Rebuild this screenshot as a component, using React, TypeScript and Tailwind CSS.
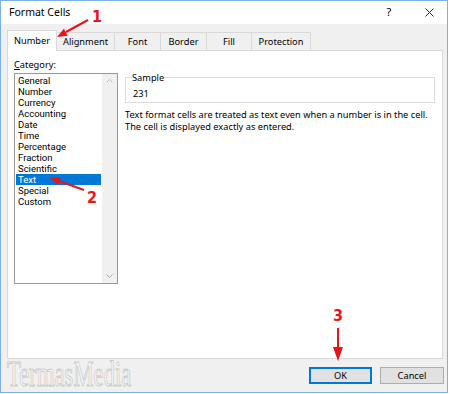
const categories = [
	"General",
	"Number",
	"Currency",
	"Accounting",
	"Date",
	"Time",
	"Percentage",
	"Fraction",
	"Scientific",
	"Text",
	"Special",
	"Custom",
];

const tabs = [
	{ label: "Alignment", w: "w-[58px]" },
	{ label: "Font", w: "w-[46px]" },
	{ label: "Border", w: "w-[46px]" },
	{ label: "Fill", w: "w-[45px]" },
	{ label: "Protection", w: "w-[59px]" },
];

const Annotations = () => (
	<>
		<svg
			className="pointer-events-none absolute left-0 top-0"
			width={450}
			height={394}
			viewBox="0 0 450 394"
		>
			<g stroke="#e8141b" strokeWidth={2} fill="#e8141b">
				<line x1={88} y1={20} x2={66} y2={32} />
				<polygon points="57,37 67.7,35.7 63.9,28.7" stroke="none" />
				<line x1={84} y1={190} x2={59} y2={181} />
				<polygon points="50,178 60.7,177.5 58.1,185.1" stroke="none" />
				<line x1={338} y1={328} x2={338} y2={348} />
				<polygon points="333,347 343,347 338,361" stroke="none" />
			</g>
		</svg>
		<span className="absolute left-[92px] top-[9px] font-['Liberation_Sans_Narrow','DejaVu_Sans_Condensed',sans-serif] text-[16px] font-bold leading-[16px] text-[#e8141b]">
			1
		</span>
		<span className="absolute left-[87px] top-[190px] font-['Liberation_Sans_Narrow','DejaVu_Sans_Condensed',sans-serif] text-[16px] font-bold leading-[16px] text-[#e8141b]">
			2
		</span>
		<span className="absolute left-[333px] top-[308px] font-['Liberation_Sans_Narrow','DejaVu_Sans_Condensed',sans-serif] text-[16px] font-bold leading-[16px] text-[#e8141b]">
			3
		</span>
	</>
);

export default function App() {
	return (
		<div className="relative h-[394px] w-[450px] overflow-hidden bg-white font-['Noto_Sans',sans-serif] text-[9.25px] text-black">
			<div className="flex h-[393px] w-[448px] flex-col border border-[#7db0e3] bg-[#f0f0f0]">
				{/* title bar */}
				<div className="flex h-[25px] items-center bg-white pl-[8px]">
					<span className="text-[10.5px]">Format Cells</span>
					<div className="ml-auto flex items-center pr-[8px]">
						<span className="w-[20px] text-center text-[11px]">?</span>
						<span className="ml-[20px] flex w-[20px] justify-center">
							<svg width={9} height={9} viewBox="0 0 9 9">
								<path d="M0.5 0.5 L8.5 8.5 M8.5 0.5 L0.5 8.5" stroke="#333" strokeWidth={1} />
							</svg>
						</span>
					</div>
				</div>

				<div className="flex flex-1 flex-col pl-[6px]">
					{/* tabs */}
					<div className="mt-[6px] flex h-[20px] items-end">
						<div className="relative z-10 -mb-px flex h-[21px] w-[50px] items-center justify-center border-x border-t border-[#d9d9d9] bg-white">
							Number
						</div>
						{tabs.map((t) => (
							<div
								key={t.label}
								className={`flex h-[18px] ${t.w} items-center justify-center border-r border-t border-[#d9d9d9] bg-[#f0f0f0]`}
							>
								{t.label}
							</div>
						))}
					</div>

					{/* panel */}
					<div className="flex h-[309px] w-[436px] border border-[#d9d9d9] bg-white pl-[6px] pt-[7px]">
						<div className="flex flex-col">
							<span className="h-[13px] leading-[13px]">
								<span className="underline">C</span>ategory:
							</span>
							<div className="mt-[2px] flex h-[211px] w-[104px] border border-[#999]">
								<ul className="flex-1 px-[1px] pt-[1px] font-['Roboto',sans-serif] text-[9.5px]">
									{categories.map((c) => (
										<li
											key={c}
											className={`h-[11px] pl-[2px] leading-[11px] ${
												c === "Text" ? "bg-[#0078d7] text-white" : ""
											}`}
										>
											{c}
										</li>
									))}
								</ul>
								<div className="flex w-[15px] flex-col items-center justify-between bg-[#f0f0f0] py-[5px]">
									<svg width={7} height={4} viewBox="0 0 7 4">
										<path d="M0.5 3.5 L3.5 0.5 L6.5 3.5" stroke="#c2c2c2" fill="none" />
									</svg>
									<svg width={7} height={4} viewBox="0 0 7 4">
										<path d="M0.5 0.5 L3.5 3.5 L6.5 0.5" stroke="#a8a8a8" fill="none" />
									</svg>
								</div>
							</div>
						</div>

						<div className="ml-[7px] mt-[14px] flex flex-col">
							<fieldset className="h-[31px] w-[310px] border border-[#dcdcdc] px-[7px]">
								<legend className="ml-[-1px] h-[11px] leading-[11px]">Sample</legend>
								<div className="pt-[5px] leading-[11px]">231</div>
							</fieldset>
							<p className="mt-[6px] leading-[12px]">
								Text format cells are treated as text even when a number is in the cell.
								<br />
								The cell is displayed exactly as entered.
							</p>
						</div>
					</div>

					{/* footer */}
					<div className="flex flex-1 items-start">
						<span className="mt-[-3px] inline-block origin-left scale-x-[0.63] font-['Liberation_Serif',serif] text-[36px] leading-[36px] text-[#f7f7f7] [-webkit-text-stroke:1px_#cccccc]">
							TermasMedia
						</span>
						<div className="ml-auto mr-[3px] mt-[8px] flex gap-[8px]">
							<button className="h-[17px] w-[63px] border border-[#0078d7] bg-[#e1e1e1] leading-[15px] shadow-[inset_0_0_0_1px_#0078d7]">
								OK
							</button>
							<button className="h-[17px] w-[64px] border border-[#adadad] bg-[#e1e1e1] leading-[15px]">
								Cancel
							</button>
						</div>
					</div>
				</div>
			</div>
			<Annotations />
		</div>
	);
}
